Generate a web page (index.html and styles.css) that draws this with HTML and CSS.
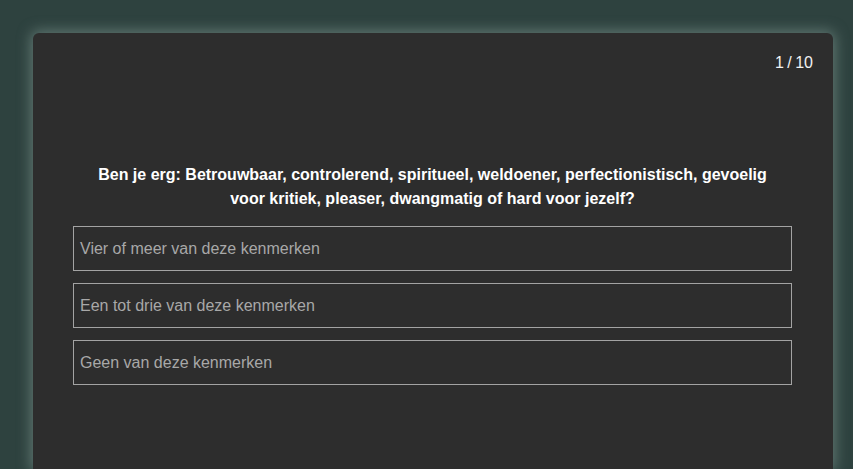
FILE: index.html
```html
<!DOCTYPE html>
<html>
<head>
    <meta charset="utf-8">
    <link rel="stylesheet" href="styles.css">
</head>
<body>
    <div class="quiz-card">
        <div class="counter">1 / 10</div>

        <div class="question">
            Ben je erg: Betrouwbaar, controlerend, spiritueel, weldoener, perfectionistisch, gevoelig voor kritiek, pleaser, dwangmatig of hard voor jezelf?
        </div>

        <div class="answers">
            <div class="answer">Vier of meer van deze kenmerken</div>
            <div class="answer">Een tot drie van deze kenmerken</div>
            <div class="answer">Geen van deze kenmerken</div>
        </div>
    </div>
</body>
</html>
```

FILE: styles.css
```css
body {
    margin: 0;
    padding: 33px 20px 0 33px;
    background: #2e423f;
    font-family: 'Liberation Sans', Arial, Helvetica, sans-serif;
    height: 469px;
    box-sizing: border-box;
    overflow: hidden;
}

.quiz-card {
    width: 800px;
    height: 436px;
    box-sizing: border-box;
    padding: 21px 41px 0 40px;
    background: #2d2d2d;
    border-radius: 6px 6px 0 0;
    box-shadow: 0 0 14px 2px rgba(140, 165, 158, 0.55);
}

.counter {
    text-align: right;
    margin-right: -21px;
    color: #f2f2f2;
    font-size: 16px;
    line-height: 18px;
    word-spacing: -1px;
}

.question {
    margin-top: 91px;
    padding: 0 20px;
    text-align: center;
    color: #ffffff;
    font-size: 16px;
    font-weight: bold;
    line-height: 24px;
}

.answers {
    display: flex;
    flex-direction: column;
    gap: 12px;
    margin-top: 15px;
}

.answer {
    height: 45px;
    box-sizing: border-box;
    padding: 0 6px;
    display: flex;
    align-items: center;
    border: 1px solid #a3a3a3;
    color: #a8a8a8;
    font-size: 16px;
}
```
